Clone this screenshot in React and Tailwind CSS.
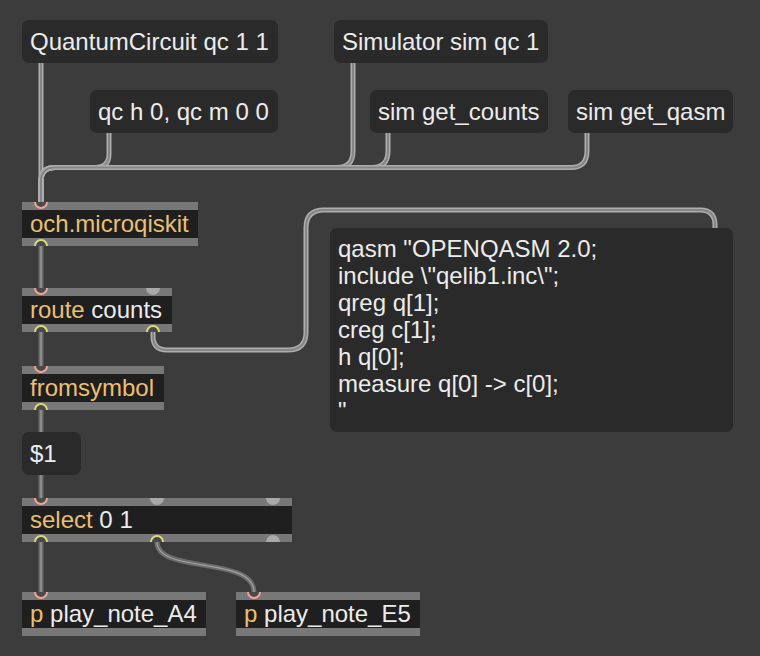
import React from "react";

const LIGHT_OUT = "#adadad";
const LIGHT_IN = "#858585";
const DARK_OUT = "#6c6c6c";
const DARK_IN = "#a0a0a0";

function Cord({ d, light }) {
  return (
    <g fill="none" strokeLinecap="butt">
      <path d={d} stroke={light ? LIGHT_OUT : DARK_OUT} strokeWidth="5" />
      <path d={d} stroke={light ? LIGHT_IN : DARK_IN} strokeWidth={light ? 2 : 1.2} />
    </g>
  );
}

function Inlet({ cx, y, kind }) {
  if (kind === "free")
    return <path d={`M${cx - 7},${y} A7,7 0 0 0 ${cx + 7},${y} Z`} fill="#a9a9a9" />;
  return (
    <path
      d={`M${cx - 6},${y} A6,6 0 0 0 ${cx + 6},${y}`}
      fill="#4a4a4a"
      stroke="#eea596"
      strokeWidth="2"
    />
  );
}

function Outlet({ cx, y, kind }) {
  if (kind === "free")
    return <path d={`M${cx - 7},${y} A7,7 0 0 1 ${cx + 7},${y} Z`} fill="#a9a9a9" />;
  return (
    <path
      d={`M${cx - 6},${y} A6,6 0 0 1 ${cx + 6},${y}`}
      fill="#4a4a4a"
      stroke="#dcda7a"
      strokeWidth="2"
    />
  );
}

function Bar() {
  return <div className="h-[8px] bg-[#787878]" />;
}

export default function App() {
  return (
    <div className="relative w-[760px] h-[656px] overflow-hidden bg-[#3c3c3c] font-['Liberation_Sans',Arial,sans-serif] text-[24px] text-[#ececec]">
      {/* patch cords */}
      <svg className="absolute left-0 top-0" width="760" height="656">
        <Cord light d="M41,63 V202" />
        <Cord light d="M109,133 V154 Q109,167.5 95,167.5 H55 Q41,167.5 41,181 V202" />
        <Cord light d="M353,63 V151 Q353,167.5 337,167.5 H55 Q41,167.5 41,181 V202" />
        <Cord light d="M388,133 V151 Q388,167.5 372,167.5 H55 Q41,167.5 41,181 V202" />
        <Cord light d="M587,133 V151 Q587,167.5 571,167.5 H55 Q41,167.5 41,181 V202" />
        <Cord light d="M153,332 V336 Q153,350 167,350 H288 Q306,350 306,332 V228 Q306,210 324,210 H700 Q715,210 715,225 V228" />
        <Cord d="M41,246 V288" />
        <Cord d="M41,332 V366" />
        <Cord d="M41,410 V432" />
        <Cord d="M41,475 V498" />
        <Cord d="M41,542 V592" />
        <Cord d="M157,542 C157,574 254,556 254,592" />
      </svg>

      {/* message boxes */}
      <div className="absolute left-[22px] top-[20px] w-[256px] h-[43px] flex items-center px-[8px] rounded-[7px] bg-[#2a2a2a] whitespace-nowrap">
        QuantumCircuit qc 1 1
      </div>
      <div className="absolute left-[334px] top-[20px] w-[214px] h-[43px] flex items-center px-[8px] rounded-[7px] bg-[#2a2a2a] whitespace-nowrap">
        Simulator sim qc 1
      </div>
      <div className="absolute left-[90px] top-[90px] w-[188px] h-[43px] flex items-center px-[8px] rounded-[7px] bg-[#2a2a2a] whitespace-nowrap">
        qc h 0, qc m 0 0
      </div>
      <div className="absolute left-[370px] top-[90px] w-[178px] h-[43px] flex items-center px-[8px] rounded-[7px] bg-[#2a2a2a] whitespace-nowrap">
        sim get_counts
      </div>
      <div className="absolute left-[568px] top-[90px] w-[165px] h-[43px] flex items-center px-[8px] rounded-[7px] bg-[#2a2a2a] whitespace-nowrap">
        sim get_qasm
      </div>
      <div className="absolute left-[330px] top-[228px] w-[403px] h-[204px] pt-[7px] px-[8px] rounded-[7px] bg-[#2a2a2a] leading-[27px] whitespace-pre">
        {'qasm "OPENQASM 2.0;\ninclude \\"qelib1.inc\\";\nqreg q[1];\ncreg c[1];\nh q[0];\nmeasure q[0] -> c[0];\n"'}
      </div>
      <div className="absolute left-[22px] top-[432px] w-[59px] h-[43px] flex items-center px-[8px] rounded-[7px] bg-[#2a2a2a] whitespace-nowrap">
        $1
      </div>

      {/* object boxes */}
      <div className="absolute left-[22px] top-[202px] w-[176px] h-[44px] flex flex-col bg-[#1f1f1f]">
        <Bar />
        <div className="h-[28px] flex items-center px-[8px] leading-[28px] whitespace-nowrap text-[#ebbf72]">och.microqiskit</div>
        <Bar />
      </div>
      <div className="absolute left-[22px] top-[288px] w-[150px] h-[44px] flex flex-col bg-[#1f1f1f]">
        <Bar />
        <div className="h-[28px] flex items-center px-[8px] leading-[28px] whitespace-nowrap">
          <span className="text-[#ebbf72]">route</span>
          <span>&nbsp;counts</span>
        </div>
        <Bar />
      </div>
      <div className="absolute left-[22px] top-[366px] w-[142px] h-[44px] flex flex-col bg-[#1f1f1f]">
        <Bar />
        <div className="h-[28px] flex items-center px-[8px] leading-[28px] whitespace-nowrap text-[#ebbf72]">fromsymbol</div>
        <Bar />
      </div>
      <div className="absolute left-[22px] top-[498px] w-[270px] h-[44px] flex flex-col bg-[#1f1f1f]">
        <Bar />
        <div className="h-[28px] flex items-center px-[8px] leading-[28px] whitespace-nowrap">
          <span className="text-[#ebbf72]">select</span>
          <span>&nbsp;0 1</span>
        </div>
        <Bar />
      </div>
      <div className="absolute left-[22px] top-[592px] w-[184px] h-[44px] flex flex-col bg-[#1f1f1f]">
        <Bar />
        <div className="h-[28px] flex items-center px-[8px] leading-[28px] whitespace-nowrap">
          <span className="text-[#ebbf72]">p</span>
          <span>&nbsp;play_note_A4</span>
        </div>
        <Bar />
      </div>
      <div className="absolute left-[236px] top-[592px] w-[184px] h-[44px] flex flex-col bg-[#1f1f1f]">
        <Bar />
        <div className="h-[28px] flex items-center px-[8px] leading-[28px] whitespace-nowrap">
          <span className="text-[#ebbf72]">p</span>
          <span>&nbsp;play_note_E5</span>
        </div>
        <Bar />
      </div>

      {/* inlets / outlets */}
      <svg className="absolute left-0 top-0 pointer-events-none" width="760" height="656">
        <Inlet cx={41} y={202} />
        <Outlet cx={41} y={246} />

        <Inlet cx={41} y={288} />
        <Inlet cx={153} y={288} kind="free" />
        <Outlet cx={41} y={332} />
        <Outlet cx={153} y={332} />

        <Inlet cx={41} y={366} />
        <Outlet cx={41} y={410} />

        <Inlet cx={41} y={498} />
        <Inlet cx={157} y={498} kind="free" />
        <Inlet cx={273} y={498} kind="free" />
        <Outlet cx={41} y={542} />
        <Outlet cx={157} y={542} />
        <Outlet cx={273} y={542} kind="free" />

        <Inlet cx={41} y={592} />
        <Inlet cx={254} y={592} />
      </svg>
    </div>
  );
}
